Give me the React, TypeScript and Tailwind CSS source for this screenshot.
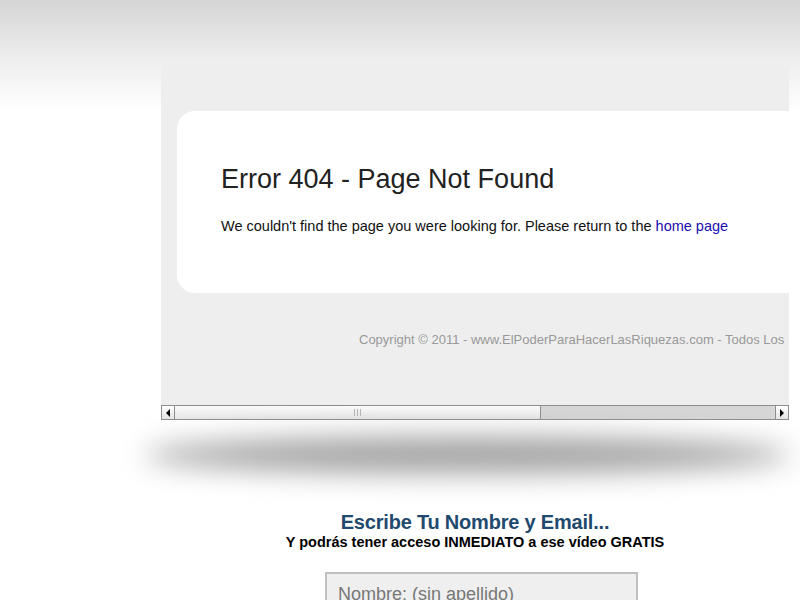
export default function App() {
  return (
    <div
      className="relative h-[600px] w-[800px] overflow-hidden bg-[linear-gradient(to_bottom,#d5d5d5_0px,#efefef_62px,#ffffff_112px)]"
      style={{ fontFamily: '"Liberation Sans", Arial, sans-serif' }}
    >
      {/* framed error page */}
      <div className="ml-[161px] mt-[65px] w-[628px] bg-[#eeeeee]">
        <div className="h-[340px] overflow-hidden pt-[46px] pl-[16px]">
          <div className="h-[182px] w-[700px] rounded-l-[18px] bg-white pl-[44px] pt-[53px]">
            <h1 className="text-[27px] leading-[31px] text-[#222222]">
              Error 404 - Page Not Found
            </h1>
            <p className="mt-[22px] text-[14.5px] leading-[18px] text-[#111111]">
              We couldn't find the page you were looking for. Please return to the{' '}
              <a href="#" className="text-[#1a0dab]">
                home page
              </a>
            </p>
          </div>
          <p className="mt-[39px] whitespace-nowrap pl-[182px] text-[13px] leading-[16px] text-[#999999]">
            Copyright © 2011 - www.ElPoderParaHacerLasRiquezas.com - Todos Los
          </p>
        </div>
        {/* horizontal scrollbar */}
        <div className="flex h-[15px] border border-[#8e8e8e] bg-[#d6d6d6]">
          <div className="flex w-[13px] items-center justify-center border-r border-[#8e8e8e] bg-[linear-gradient(to_bottom,#ffffff,#e4e4e4)]">
            <span className="h-0 w-0 border-y-[4px] border-r-[4px] border-y-transparent border-r-black" />
          </div>
          <div className="flex w-[366px] items-center justify-center border-r border-[#8e8e8e] bg-[linear-gradient(to_bottom,#fbfbfb,#e6e6e6)]">
            <span className="flex gap-[2px]">
              <span className="h-[7px] w-px bg-[#b5b5b5]" />
              <span className="h-[7px] w-px bg-[#b5b5b5]" />
              <span className="h-[7px] w-px bg-[#b5b5b5]" />
            </span>
          </div>
          <div className="flex-1" />
          <div className="flex w-[13px] items-center justify-center border-l border-[#8e8e8e] bg-[linear-gradient(to_bottom,#ffffff,#e4e4e4)]">
            <span className="h-0 w-0 border-y-[4px] border-l-[4px] border-y-transparent border-l-black" />
          </div>
        </div>
      </div>

      {/* drop shadow under the frame */}
      <div className="absolute left-[145px] top-[437px] h-[36px] w-[645px] rounded-[50%] bg-[#a0a0a0] blur-[14px]" />

      {/* opt-in form */}
      <div className="ml-[161px] mt-[90px] w-[628px] text-center">
        <h2 className="text-[20px] font-bold leading-[24px] tracking-[-0.2px] text-[#1f4a6e]">
          Escribe Tu Nombre y Email...
        </h2>
        <p className="text-[14.5px] font-bold leading-[17px] text-black">
          Y podrás tener acceso INMEDIATO a ese vídeo GRATIS
        </p>
        <div className="mt-[21px] flex justify-center pl-[13px]">
          <input
            className="h-[44px] w-[313px] border-2 border-[#c0c0c0] bg-[#efefef] px-[11px] text-[18px] text-[#666666] placeholder:text-[#777777]"
            placeholder="Nombre: (sin apellido)"
          />
        </div>
      </div>
    </div>
  );
}
